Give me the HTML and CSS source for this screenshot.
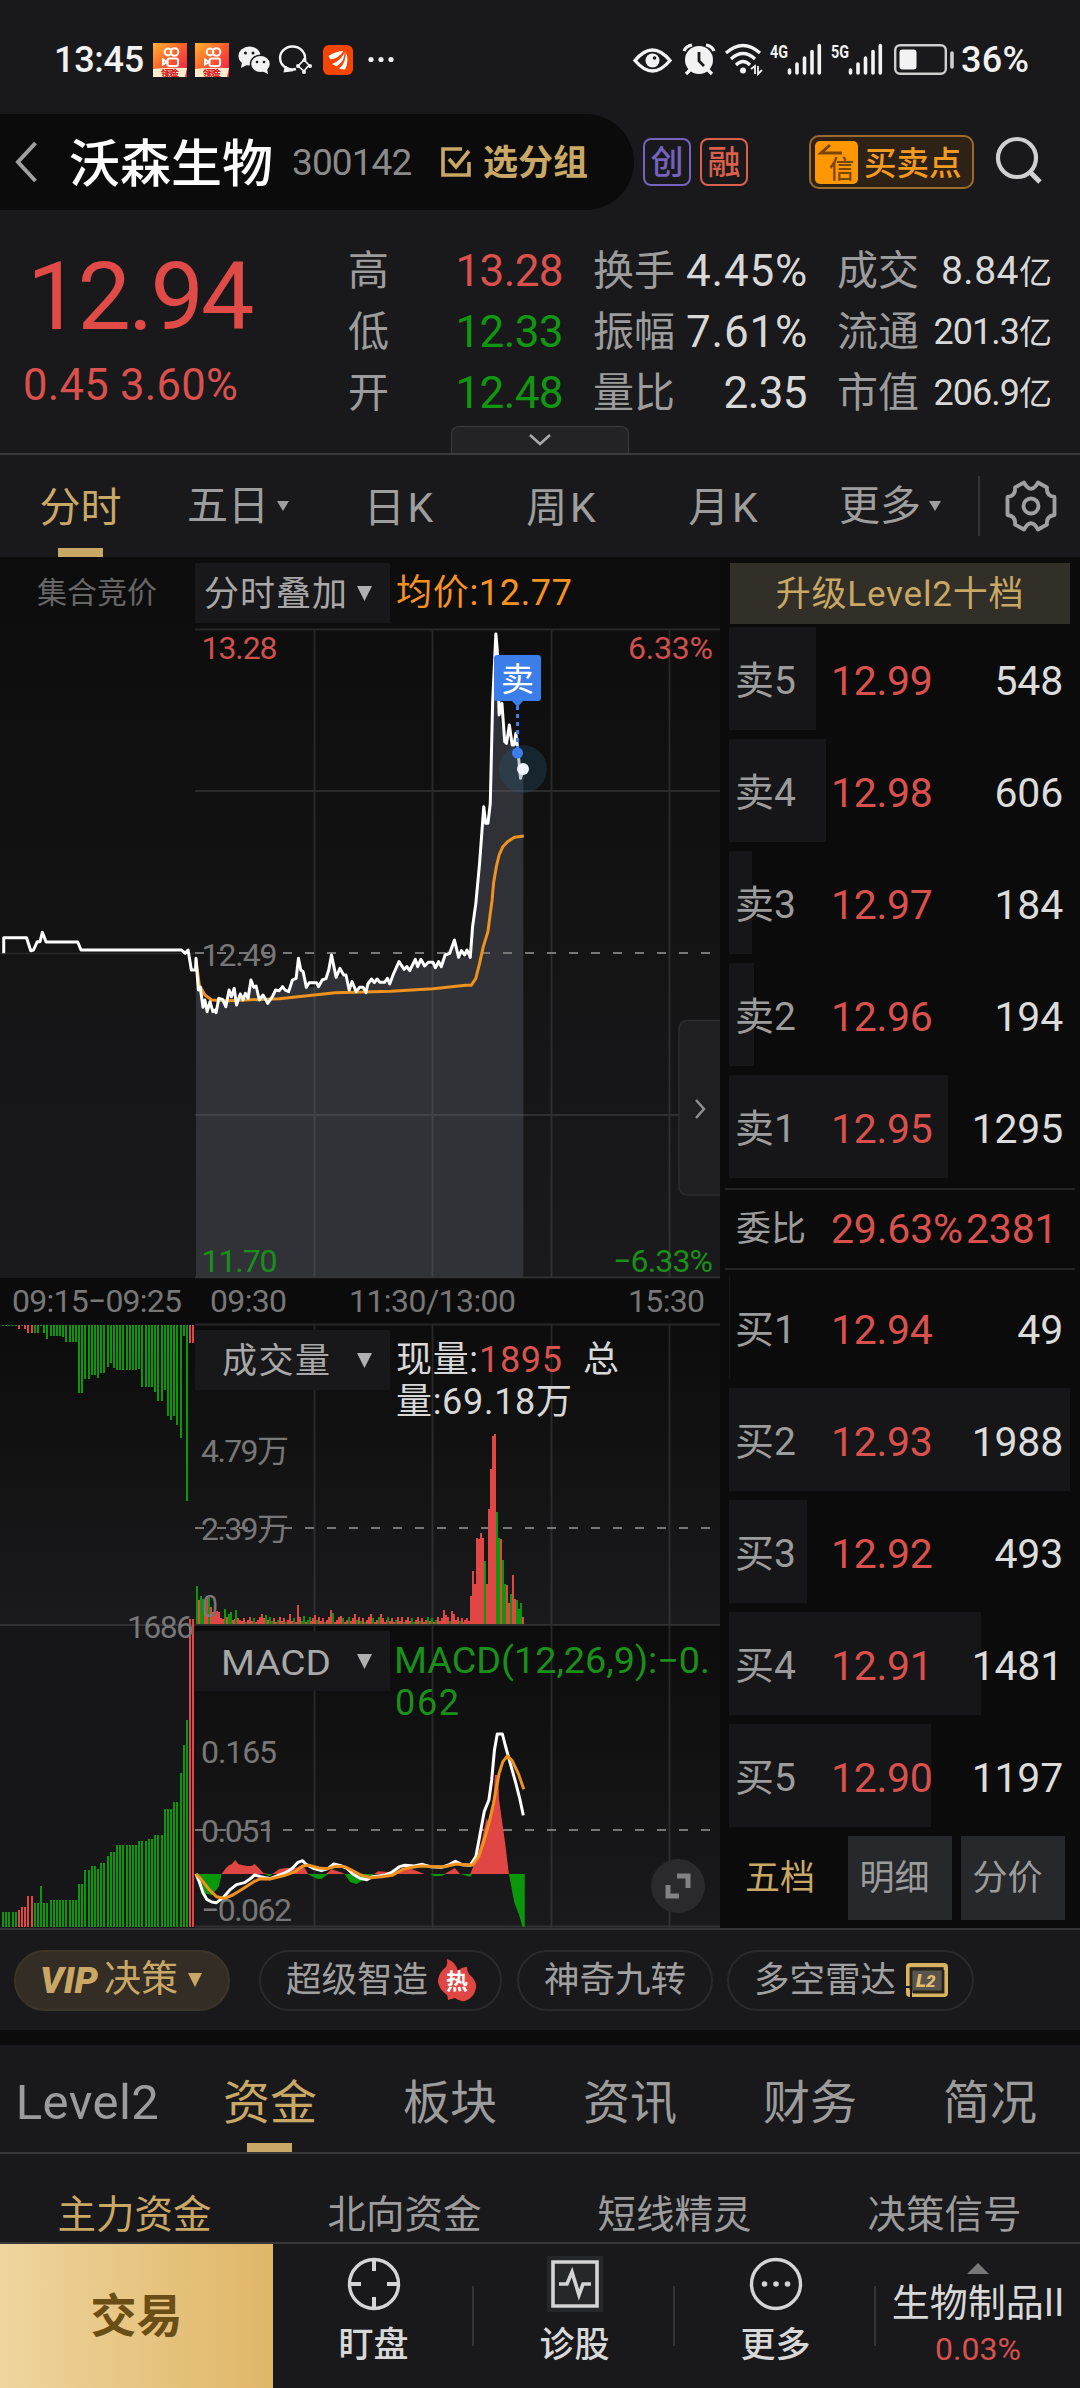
FILE: index.html
```html
<!DOCTYPE html>
<html lang="zh-CN">
<head>
<meta charset="utf-8">
<title>沃森生物 300142</title>
<link rel="stylesheet" href="styles.css">
</head>
<body>
<main class="screen">
  <header class="status">
    <span class="clock">13:45</span>
    <svg class="status-left" width="246" height="40" viewBox="150 40 246 40">
      <defs>
        <linearGradient id="ks" x1="0" y1="0" x2="1" y2="1"><stop offset="0" stop-color="#ffb52e"/><stop offset=".5" stop-color="#ff5a2c"/><stop offset="1" stop-color="#f5124f"/></linearGradient>
        <g id="kuaishou">
          <rect width="34" height="34" fill="url(#ks)"/>
          <g fill="none" stroke="#fff" stroke-width="2"><circle cx="15" cy="9" r="3.4"/><circle cx="21.5" cy="9" r="3.8"/><rect x="14.5" y="15.500" width="10.500" height="7.500" rx="2"/><path d="M14 19l-4-2.500v5z"/></g>
          <path d="M0 26q14-2 34-1l-2 9H0z" fill="#ffeccd"/>
          <text x="8" y="33" font-size="7.500" font-weight="900" fill="#d52222" textLength="18">领现金</text>
        </g>
      </defs>
      <use href="#kuaishou" x="153" y="43"/><use href="#kuaishou" x="195" y="43"/>
      <g fill="#f2f2f2"><ellipse cx="249.500" cy="56" rx="11" ry="9.500"/><path d="M242 62l-1 6 6-3z"/></g>
      <g fill="#f2f2f2" stroke="#19191b" stroke-width="1.500"><ellipse cx="260.500" cy="64" rx="10" ry="8.800"/></g><path d="M262 71l6 3-1-6z" fill="#f2f2f2"/>
      <g fill="#19191b"><circle cx="245.500" cy="53" r="1.500"/><circle cx="253" cy="53" r="1.500"/><circle cx="257" cy="62" r="1.300"/><circle cx="264" cy="62" r="1.300"/></g>
      <g fill="none" stroke="#f2f2f2" stroke-width="2.400"><path d="M296 69a12.500 11.500 0 1 1 9-10M286 66l-1 5 8-1"/><path d="M304 60l5 5-5 6-6-5z" stroke-width="1.600"/></g>
      <g fill="#f2f2f2"><circle cx="304.500" cy="60" r="2"/><circle cx="310" cy="66" r="2"/><circle cx="304" cy="72" r="2"/><circle cx="298" cy="66" r="2"/></g>
      <rect x="323" y="45" width="30" height="30" rx="6" fill="#f54500"/>
      <g fill="#fff"><path d="M328.500 56q8-5 15-5q-4 7-13 8.500z"/><path d="M332 64q10-4 13-13q2 10-8 15.500z"/><path d="M339 69q8-7 6-18q5 9 0 18.500z"/></g>
      <path d="M331 60.500q9-2 13.500-9M337 67q9-6 8-15.500" stroke="#f54500" stroke-width="1.300" fill="none"/>
      <g fill="#f2f2f2"><circle cx="371" cy="59.500" r="2.600"/><circle cx="381" cy="59.500" r="2.600"/><circle cx="391" cy="59.500" r="2.600"/></g>
    </svg>
    <svg class="status-right" width="326" height="40" viewBox="632 40 326 40">
      <g fill="none" stroke="#f2f2f2" stroke-width="3.400"><path d="M635 60.500q17.500-21 35 0q-17.500 21-35 0z"/></g>
      <circle cx="652.500" cy="60.500" r="7" fill="#f2f2f2"/><circle cx="654.500" cy="58" r="1.800" fill="#19191b"/>
      <g fill="none" stroke="#f2f2f2" stroke-width="3.200"><path d="M684 51q2-5 8-6M714 51q-2-5-8-6M690 70l-4 4M708 70l4 4"/></g><circle cx="699" cy="60" r="14" fill="#f2f2f2"/><path d="M699 52v9l5 5" fill="none" stroke="#19191b" stroke-width="2.800"/>
      <g fill="none" stroke="#f2f2f2" stroke-width="3.200"><path d="M726 53q17-15 34 0M731 59q12-11 24 0M736 65q7-7 14 0"/></g><circle cx="743" cy="70.500" r="3" fill="#f2f2f2"/><path d="M751 69l4-3v8M758 66v8l4-4" fill="none" stroke="#f2f2f2" stroke-width="1.800"/>
      <g class="net"><text x="770" y="57.500" textLength="18" lengthAdjust="spacingAndGlyphs">4G</text><text x="831" y="57.500" textLength="18" lengthAdjust="spacingAndGlyphs">5G</text></g>
      <g stroke="#f2f2f2" stroke-width="3.600" stroke-linecap="round"><path id="sig" d="M789.500 70v3M797 64v9M804.500 58v15M812 51.500v21.500M819.300 45.500v27.500"/><use href="#sig" x="61"/></g>
      <rect x="895.200" y="45.200" width="50.600" height="28.600" rx="5" fill="none" stroke="#cfcfcf" stroke-width="2.400"/><rect x="899.500" y="49.500" width="17" height="20" rx="3" fill="#f2f2f2"/><path d="M952 53v14" stroke="#cfcfcf" stroke-width="3.600" stroke-linecap="round"/>
    </svg>
    <span class="battery">36%</span>
  </header>

  <section class="title">
    <div class="name-pill">
      <svg width="24" height="42" viewBox="0 0 24 42"><path d="M21.500 2L4 21l17.500 19" fill="none" stroke="#a0a0a0" stroke-width="4"/></svg>
      <h1>沃森生物</h1><span class="code">300142</span>
      <svg width="32" height="32" viewBox="0 0 32 32" class="check"><path d="M22 3H3v26h26V16M9 13l7 8L29 5" fill="none" stroke="#c9a866" stroke-width="3.600"/></svg>
      <span class="group">选分组</span>
    </div>
    <span class="tag violet">创</span><span class="tag coral">融</span>
    <span class="signal"><svg width="43" height="43" viewBox="0 0 43 43"><rect width="43" height="43" rx="5" fill="#ff9800"/><path d="M15 4L6 12H27" fill="none" stroke="#7a4508" stroke-width="3"/><text x="14" y="37" font-size="25" fill="#7a4508">信</text></svg><span>买卖点</span></span>
    <svg class="search" width="52" height="52" viewBox="0 0 52 52"><circle cx="23" cy="22" r="19" fill="none" stroke="#d0d0d0" stroke-width="4.200"/><path d="M36 36l10 10" stroke="#d0d0d0" stroke-width="5"/></svg>
  </section>

  <section class="quote">
    <div class="last"><div class="price">12.94</div><div class="change">0.45 3.60%</div></div>
    <dl class="stats">
      <dt>高</dt><dd class="up">13.28</dd><dt>换手</dt><dd class="w">4.45%</dd><dt>成交</dt><dd class="m">8.84<i>亿</i></dd>
      <dt>低</dt><dd class="down">12.33</dd><dt>振幅</dt><dd class="w">7.61%</dd><dt>流通</dt><dd class="s">201.3<i>亿</i></dd>
      <dt>开</dt><dd class="down">12.48</dd><dt>量比</dt><dd>2.35</dd><dt>市值</dt><dd class="s">206.9<i>亿</i></dd>
    </dl>
    <div class="pull"><svg width="24" height="14" viewBox="0 0 24 14"><path d="M2 2l10 9L22 2" fill="none" stroke="#aaa" stroke-width="2.600"/></svg></div>
  </section>

  <nav class="periods">
    <span class="on">分时</span><span>五日<b></b></span><span class="k">日K</span><span class="k">周K</span><span class="k">月K</span><span>更多<b></b></span>
    <em><svg width="52" height="52" viewBox="-26 -26 52 52" fill="none" stroke="#a0a0a0" stroke-width="3.800" stroke-linejoin="round"><path d="M-7-23.500Q0-11 7-23.500L16-18.500Q15-10 23.500-9V9Q15 10 16 18.500L7 23.500Q0 11-7 23.500L-16 18.500Q-15 10-23.500 9V-9Q-15-10-16-18.500Z"/><circle r="7.500"/></svg></em>
  </nav>

  <section class="market">
    <svg class="charts" width="720" height="1371" viewBox="0 557 720 1371">
      <defs>
        <linearGradient id="shade" x1="0" y1="0" x2="0" y2="1"><stop offset="0" stop-color="#0c0c0c"/><stop offset="1" stop-color="#1a1a1c"/></linearGradient>
      </defs>
      <rect y="557" width="720" height="721" fill="url(#shade)"/>
      <rect y="1324" width="195" height="302" fill="url(#shade)"/><rect x="195" y="1324" width="525" height="301" fill="url(#shade)"/>
      <rect y="1626" width="195" height="302" fill="#161618"/><rect x="195" y="1626" width="525" height="302" fill="url(#shade)"/>
      <g class="price" transform="matrix(.4656 0 0 .33333 0 900)">
        <path class="area" d="M421 175 426 270 430 262 436 322 445 335 464 338 470 295 485 320 492 270 508 315 522 300 539 240 557 300 575 310 592 270 620 275 628 240 636 235 641 175 658 262 684 260 700 236 712 165 722 232 743 225 750 270 765 275 786 278 798 237 837 252 857 185 880 212 892 178 935 203 956 165 976 120 985 172 1010 172 1015 80 1022 10 1030-110 1039-280 1048-230 1053-290 1058-590 1065-798 1072-555 1084-475 1100-465 1113-440 1118-365 1124-390V1130H421Z"/>
      </g>
      <path class="grid" d="M195 629.500H720M195 791H720M195 1115H720M195 1277.500H720M195 1324.500H720M0 1625H720M195 1926.500H720M314.500 629V1277M314.500 1324V1928M432.500 629V1277M432.500 1324V1928M551.500 629V1277M551.500 1324V1928M669.500 629V1277M669.500 1324V1928"/>
      <path d="M0 953.500H195" stroke="#28282a" stroke-width="1.500"/>
      <path class="dash" d="M195 953H712M195 1528H712M195 1830H712"/>
      <g class="axis">
        <text class="c-up" x="201.500" y="659" textLength="76">13.28</text><text class="c-up end" x="713" y="659" textLength="85">6.33%</text>
        <text x="201.500" y="966" textLength="76" fill="#9a9a9a">12.49</text>
        <text class="c-down" x="201.500" y="1272" textLength="76">11.70</text><text class="c-down end" x="713" y="1272" textLength="100">−6.33%</text>
        <text x="12" y="1312" textLength="170">09:15−09:25</text><text x="210" y="1312" textLength="77">09:30</text><text x="349" y="1312" textLength="167">11:30/13:00</text><text x="628" y="1312" textLength="77">15:30</text>
        <text x="201" y="1462" textLength="88">4.79万</text><text x="201" y="1540" textLength="88">2.39万</text>
        <text x="201" y="1763" textLength="76">0.165</text><text x="201" y="1842" textLength="75">0.051</text><text x="201" y="1921" textLength="91">−0.062</text>
        <text x="37" y="603" style="font-size:30px;fill:#666">集合竞价</text>
      </g>
      <g id="bars" shape-rendering="crispEdges"></g>
      <g class="axis"><text x="202" y="1617" textLength="16" lengthAdjust="spacingAndGlyphs">0</text><text x="127" y="1638" textLength="67">1686</text></g>
      <g class="price" transform="matrix(.4656 0 0 .33333 0 900)">
        <polyline class="avg" points="421,180 428,255 440,285 455,300 490,302 600,296 640,290 720,278 840,274 930,266 1000,256 1012,256 1022,235 1030,190 1038,140 1048,95 1053,40 1057,0 1060,-50 1066,-100 1072,-135 1080,-160 1090,-175 1105,-188 1125,-192"/>
        <polyline class="line" points="8,160 8,113 57,113 66,152 72,150 80,125 86,125 91,97 99,126 167,126 174,150 390,150 398,160 404,150 411,210 420,210 421,175 426,270 430,262 436,322 440,300 445,335 451,305 457,335 462,330 464,338 470,295 478,298 485,320 492,270 497,290 503,265 508,315 516,282 522,300 527,280 533,295 539,240 545,262 550,258 557,300 565,285 575,310 585,290 592,270 600,272 607,260 612,270 620,275 628,240 636,235 641,175 646,210 651,215 658,262 664,248 680,248 684,260 692,240 700,236 706,210 712,165 722,232 730,205 738,225 743,225 750,270 756,245 765,275 772,262 780,262 786,278 790,252 798,237 804,248 810,237 816,247 826,247 832,235 837,252 845,222 857,185 868,208 874,200 880,212 892,178 897,200 904,178 912,198 920,187 930,187 935,203 942,185 948,200 956,165 966,160 976,120 985,172 991,152 998,165 1003,150 1010,172 1015,80 1022,10 1030,-110 1039,-280 1043,-230 1048,-230 1053,-290 1058,-590 1060,-650 1065,-798 1068,-750 1069,-720 1072,-555 1078,-590 1084,-475 1088,-470 1094,-525 1100,-465 1104,-465 1108,-500 1113,-440 1118,-365 1123,-390"/>
      </g>
      <circle cx="523" cy="769" r="24" fill="#265673" opacity=".3"/><circle cx="523" cy="769" r="6" fill="#eef4ff"/>
      <path d="M517.500 706V750" stroke="#3f7fe8" stroke-width="3" stroke-dasharray="4 4"/><circle cx="517.500" cy="753" r="5.500" fill="#3b7de9"/>
      <path d="M497 655h41q3 0 3 3v40q0 3-3 3h-15l-5.500 6-5.500-6h-15q-3 0-3-3v-40q0-3 3-3z" fill="#3b7de9"/>
      <text x="501" y="691" font-size="33" fill="#fff">卖</text>

      <g class="drop">
        <rect x="195" y="563" width="195" height="60"/><rect x="195" y="1330" width="195" height="60"/><rect x="195" y="1631" width="195" height="60"/>
        <text x="204" y="606" textLength="143">分时叠加</text><text x="222" y="1373" textLength="108">成交量</text><text x="221" y="1675" font-size="38" textLength="110" lengthAdjust="spacingAndGlyphs">MACD</text>
        <path d="M357 586h15l-7.500 15zM357 1353h15l-7.500 15zM357 1654h15l-7.500 15z"/>
      </g>
      <g class="note">
        <text x="396" y="605" fill="#f79222" textLength="176">均价:12.77</text>
        <text x="396" y="1372" textLength="82">现量:</text><text x="479" y="1372" fill="#d9544f" textLength="83">1895</text><text x="583" y="1372">总</text>
        <text x="396" y="1414" textLength="176">量:69.18万</text>
        <text x="394" y="1673" fill="#1a8f1a" textLength="316" lengthAdjust="spacingAndGlyphs">MACD(12,26,9):−0.</text><text x="395" y="1715" fill="#1a8f1a" textLength="64">062</text>
      </g>
      <g transform="matrix(.4656 0 0 .33333 0 1610)">
        <path fill="#e04643" d="M476 792L485 775 492 766 498 762 505 750 512 762 520 765 530 768 540 768 547 762 553 770 565 788 575 792ZM585 792L600 777 615 774 635 774 650 765 662 792ZM700 792L712 778 735 788 740 792ZM803 792L812 784 845 787 865 776 885 778 912 792ZM955 792L977 774 988 792ZM1010 792L1022 750 1035 690 1045 625 1050 640 1060 560 1063 495H1070L1072 570 1080 650 1085 700 1093 792Z"/>
        <path fill="#0a970a" d="M421 792H476L470 830 455 856 440 850 430 815ZM570 792H585L578 800ZM660 792H705L690 807 680 806ZM740 792H803L785 808 765 822 752 816ZM925 792H957L950 797 932 799ZM988 792H1014L1010 800ZM1093 792H1127V950H1122L1115 915 1105 880Z"/>
        <g class="price">
        <polyline class="line" points="421,792 428,815 436,848 444,868 455,876 465,878 480,862 495,838 508,824 525,818 536,808 547,795 560,800 580,806 598,796 612,789 628,775 640,757 650,752 658,764 675,776 690,782 704,776 717,762 732,767 745,775 758,792 772,804 788,809 800,800 825,796 840,788 858,770 870,766 890,768 907,763 925,770 948,772 965,764 978,754 992,764 1010,766 1022,740 1030,680 1040,605 1050,570 1056,510 1062,420 1068,372 1079,372 1085,405 1096,460 1108,520 1117,570 1124,616"/>
        <polyline class="avg" points="421,792 432,808 450,840 465,860 482,865 500,855 520,838 545,815 560,806 580,807 610,797 635,784 650,768 665,766 685,774 704,776 722,769 740,770 755,780 775,795 795,803 820,800 842,796 865,778 885,772 905,768 930,770 955,770 980,762 1005,765 1015,765 1028,740 1038,700 1050,640 1060,580 1072,490 1080,455 1090,438 1100,452 1113,490 1125,538"/>
        </g>
      </g>
      <path d="M720 1020.500H688q-9 0-9 9V1186q0 9 9 9H720" fill="#1f1f21" stroke="#2c2c2e" stroke-width="1.500"/><path d="M696 1100l8 9-8 9" fill="none" stroke="#909090" stroke-width="2.500"/>
      <circle cx="678" cy="1886" r="27" fill="#2a2a2c"/><path d="M677 1876H688V1888M668 1885V1896H679" fill="none" stroke="#828282" stroke-width="5"/>
    </svg>

    <aside class="book">
      <div class="upgrade">升级Level2十档</div>
      <ol class="levels" id="asks"></ol>
      <div class="ratio"><span>委比</span><b>29.63%</b><b>2381</b></div>
      <ol class="levels" id="bids"></ol>
      <div class="book-tabs"><span class="on">五档</span><span>明细</span><span>分价</span></div>
    </aside>
  </section>

  <section class="tools">
    <span class="pill vip"><svg width="68" height="56" viewBox="0 0 68 56"><text x="4" y="41" textLength="58" lengthAdjust="spacingAndGlyphs">VIP</text></svg>决策<b></b></span>
    <span class="pill p1">超级智造<svg width="40" height="44" viewBox="0 0 40 44"><path d="M10 1q8 2 11 12q3-4 9-4q0 4 2 7q8 7 7 14q-2 10-11 13q-5 1-10-3l-7 2q0-3-1-5Q2 31 1 24q0-9 8-15q2-4 1-8z" fill="#e04643"/><text x="9" y="31" font-size="22" fill="#fff" font-weight="700">热</text></svg></span>
    <span class="pill p2">神奇九转</span>
    <span class="pill p3">多空雷达<svg width="44" height="36" viewBox="0 0 44 36"><rect x="3" y="3" width="38" height="30" rx="2" fill="#59544d" stroke="#d9b35f" stroke-width="4"/><path d="M6 28V7H38M8 30H38V8" fill="none" stroke="#28241c" stroke-width="2.800"/><path d="M0 25h6v10" stroke="#19191b" stroke-width="2" fill="none"/><text x="11" y="25" font-size="19" font-weight="900" font-style="italic" fill="#e2bd70">L<tspan font-size="17">2</tspan></text></svg></span>
  </section>

  <nav class="sections"><span class="latin">Level2</span><span class="on">资金</span><span>板块</span><span>资讯</span><span>财务</span><span>简况</span></nav>
  <nav class="subs"><span class="on">主力资金</span><span>北向资金</span><span>短线精灵</span><span>决策信号</span></nav>

  <footer class="dock">
    <a class="trade">交易</a>
    <a class="act"><svg width="58" height="58" viewBox="-29 -29 58 58" fill="none" stroke="#d4d4d4" stroke-width="3.400"><circle r="24.500"/><path d="M0-24V-13M0 24V13M-24 0H-13M24 0H13" stroke-width="4"/></svg>盯盘</a>
    <a class="act"><svg width="58" height="58" viewBox="-29 -29 58 58" fill="none" stroke="#d4d4d4" stroke-width="3.600"><path d="M-28-28H28V28H-28Z" fill="#262729" stroke="none"/><path d="M-22-22H22V22H-22Z"/><path d="M-16 0H-8L-3-12 4 11 8 0H16"/></svg>诊股</a>
    <a class="act"><svg width="58" height="58" viewBox="-29 -29 58 58" fill="none" stroke="#d4d4d4" stroke-width="3.400"><circle r="24.500"/><g fill="#d4d4d4" stroke="none"><circle cx="-11.500" r="2.800"/><circle r="2.800"/><circle cx="11.500" r="2.800"/></g></svg>更多</a>
    <a class="sector"><b></b>生物制品II<small>0.03%</small></a>
  </footer>
</main>
<script src="charts.js"></script>
</body>
</html>
```
FILE: styles.css
```css
* { box-sizing: border-box; }
body { margin: 0; background: #19191b; color: #d8d8d8; font-family: Roboto, "Noto Sans CJK SC", sans-serif; }
svg { display: block; flex: none; }
h1, dl, dd, ol { margin: 0; padding: 0; }
i, em { font-style: normal; }
.screen { width: 1080px; height: 2388px; overflow: hidden; display: flex; flex-direction: column; background: #19191b; }
.screen > * { flex: none; }
.up { color: #d9504d; }
.down { color: #109610; }

.status { height: 114px; padding: 40px 47px 0 54px; display: flex; align-items: flex-start; color: #f2f2f2; }
.clock, .battery { font-size: 36px; line-height: 40px; font-weight: 500; }
.clock { width: 96px; letter-spacing: -.3px; }
.status-right { margin-left: 236px; }
.battery { margin-left: 3px; white-space: nowrap; letter-spacing: .3px; }
.net { fill: #f2f2f2; font-size: 19px; font-weight: 700; }

.title { height: 96px; display: flex; align-items: center; }
.name-pill { width: 634px; height: 96px; border-radius: 0 48px 48px 0; background: #0b0b0b; display: flex; align-items: center; padding-left: 14px; }
.title h1 { font-size: 51px; font-weight: 500; color: #fff; line-height: 90px; width: 223px; margin-left: 31px; padding-top: 5px; }
.code { font-size: 37px; color: #8a8a8a; letter-spacing: -.9px; width: 148px; }
.check { margin-right: 11px; }
.group { font-size: 35px; font-weight: 700; color: #c9a866; line-height: 90px; padding-top: 3px; }
.tag { width: 48px; height: 48px; border: 2px solid; border-radius: 8px; display: grid; place-items: center; font-size: 33px; font-weight: 500; line-height: 45px; margin-left: 9px; }
.violet { color: #7563bd; }
.coral { color: #d9604c; }
.signal { margin-left: 61px; width: 165px; height: 54px; border: 2px solid #9c6b2c; border-radius: 10px; background: #2e2216; display: flex; align-items: center; gap: 6px; padding-left: 4px; font-size: 32.500px; font-weight: 500; line-height: 50px; color: #f39a20; }
.signal span { padding-top: 3px; }
.search { margin-left: 20px; }

.quote { height: 245px; display: flex; position: relative; border-bottom: 2px solid #3a3a3c; }
.last { width: 348px; color: #e04b48; }
.price { font-size: 95px; line-height: 100px; margin: 37px 0 0 27px; letter-spacing: -2.800px; }
.change { font-size: 43.500px; line-height: 50px; margin: 14px 0 0 23px; color: #d9504d; letter-spacing: .3px; white-space: nowrap; }
.stats { width: 704px; height: 183px; margin-top: 31px; display: grid; grid-template-columns: 84px 131px 113px 131px 114px 131px; grid-template-rows: repeat(3, 61px); }
.stats dt { font-size: 41px; line-height: 61px; color: #9c9c9c; white-space: nowrap; }
.stats dt:nth-of-type(3n+2) { padding-left: 30px; }
.stats dt:nth-of-type(3n) { padding-left: 30px; }
.stats dd { font-size: 44px; line-height: 60px; text-align: right; letter-spacing: -.6px; white-space: nowrap; }
.stats dd.w { letter-spacing: .8px; margin-right: -1px; }
.stats dd.m { font-size: 39px; letter-spacing: .5px; }
.stats dd.s { font-size: 36px; letter-spacing: -1px; }
.stats i { font-size: 33px; letter-spacing: 0; }
.pull { position: absolute; left: 451px; bottom: 0; width: 178px; height: 27px; border: 1.500px solid #3a3a3c; border-bottom: 0; border-radius: 8px 8px 0 0; background: #232326; display: grid; place-items: center; }

.periods { height: 102px; display: grid; grid-template: 102px / 161px 154px 170px 155px 169px 162px 109px; font-size: 41px; line-height: 102px; color: #9e9e9e; }
.periods span { display: flex; justify-content: center; align-items: center; gap: 8px; white-space: nowrap; }
.periods .k { letter-spacing: 3px; padding-top: 4px; }
.periods span.on { color: #c9a866; position: relative; padding-top: 4px; }
.periods .on::after { content: ""; position: absolute; left: 58px; bottom: 0; width: 45px; height: 9px; background: #c9a866; }
.periods b { border: 6px solid transparent; border-top: 10px solid #9e9e9e; border-bottom: 0; }
.periods em { height: 60px; align-self: center; margin-left: 7px; border-left: 2px solid #343436; display: flex; align-items: center; padding-left: 25px; }

.market { height: 1371px; display: flex; background: #0b0b0b; }
.grid { stroke: rgba(120, 120, 125, .25); stroke-width: 1.800; fill: none; }
.dash { stroke: #777; stroke-width: 2; stroke-dasharray: 9 13; fill: none; }
.area { fill: #333439; opacity: .95; }
.price .line, .price .avg { fill: none; stroke: #fff; stroke-width: 3; vector-effect: non-scaling-stroke; stroke-linejoin: round; }
.price .avg { stroke: #f0921e; }
.axis text { font-size: 32px; fill: #777; }
.axis .c-up { fill: #cf504d; }
.axis .c-down { fill: #1a8f1a; }
.axis .end { text-anchor: end; }
.drop rect { fill: #18181a; }
.drop text { font-size: 35px; fill: #a8a8a8; }
.drop path { fill: #b0b0b0; }
.note text { font-size: 36px; }
.note text:not([fill]) { fill: #d8d8d8; }

.book { width: 360px; padding: 6px 5px 0; }
.upgrade { height: 61px; margin: 0 5px; background: #312f28; color: #c9a866; font-size: 35px; line-height: 63px; text-align: center; letter-spacing: .8px; }
.levels { list-style: none; margin: 3px 5px 0 4px; }
.levels li { height: 103px; margin-bottom: 9px; display: grid; grid-template-columns: 95px 1fr 115px; align-items: center; padding: 0 7px; line-height: 103px; font-size: 41px; background: linear-gradient(#161618, #161618) 0 0 / var(--depth) 100% no-repeat; }
.levels li > * { font-weight: 400; white-space: nowrap; padding-top: 3px; }
.levels li > span { color: #9c9c9c; font-size: 39px; margin-left: -1px; }
.levels b { color: #d9504d; letter-spacing: -.3px; }
.levels em { text-align: right; color: #dcdcdc; letter-spacing: -.2px; }
.ratio { height: 82px; border: 2px solid #242426; border-width: 2px 0; display: grid; grid-template-columns: 95px 135px 1fr; padding-left: 11px; font-size: 41px; line-height: 79px; }
.ratio span { font-size: 35px; color: #9c9c9c; }
.ratio b { font-weight: 400; color: #d9504d; letter-spacing: -.2px; }
#asks { height: 561px; }
#bids { margin-top: 6px; height: 560px; }
.book-tabs { display: flex; gap: 9px; margin-left: 10px; font-size: 35px; line-height: 85px; color: #9c9c9c; }
.book-tabs span { width: 104px; height: 84px; background: #27282c; padding-right: 11px; text-align: center; }
.book-tabs .on { background: none; color: #c9a866; padding-right: 14px; }

.tools { height: 102px; border-top: 2px solid #333335; display: flex; align-items: center; padding-left: 14px; }
.pill { height: 61px; border: 2px solid #2a2a2c; border-radius: 31px; display: flex; align-items: center; font-size: 35.500px; line-height: 58px; color: #a0a0a0; white-space: nowrap; padding-left: 25px; }
.vip { width: 216px; background: #332d25; border-color: #3c3527; color: #c9a866; margin-right: 29px; padding-left: 20px; font-size: 37px; }
.vip text { font: italic 900 37px Roboto, sans-serif; fill: #c9a866; }
.vip b { border: 7px solid transparent; border-top: 14px solid #c9a866; border-bottom: 0; margin-left: 10px; }
.p1 { width: 243px; margin-right: 15px; }
.p1 svg, .p3 svg { margin-left: 9px; }
.p2 { width: 196px; margin-right: 14px; }
.p3 { width: 247px; }

.sections { height: 124px; border-top: 15px solid #0b0b0b; border-bottom: 2px solid #38383a; display: grid; grid-template-columns: repeat(6, 180px); text-align: center; font-size: 47px; line-height: 115px; color: #9c9c9c; }
.sections span { height: 107px; }
.sections .latin { padding-right: 5px; font-size: 49px; letter-spacing: .4px; }
.sections .on { color: #c9a866; position: relative; }
.sections .on::after { content: ""; position: absolute; left: 67px; bottom: 0; width: 45px; height: 9px; background: #c9a866; }
.subs { height: 90px; padding-top: 16px; border-bottom: 2px solid #38383a; display: grid; grid-template-columns: repeat(4, 270px); text-align: center; font-size: 38.500px; line-height: 90px; color: #9c9c9c; }
.subs span { height: 70px; margin-left: -1px; }
.subs .on { color: #c9a866; }

.dock { height: 144px; display: flex; }
.trade { width: 273px; background: linear-gradient(90deg, #efd59e, #e0b668); color: #6a4e15; font-size: 46px; font-weight: 700; line-height: 144px; text-align: center; }
.act { width: 201px; display: flex; flex-direction: column; align-items: center; padding-top: 11px; font-size: 35px; font-weight: 500; line-height: 60px; background: linear-gradient(#343436, #343436) 100% 42px / 2px 60px no-repeat; }
.act svg { margin-bottom: 3px; }
.sector { flex: 1; display: flex; flex-direction: column; align-items: center; font-size: 38px; line-height: 58px; white-space: nowrap; }
.sector b { margin: 19px 0 0; border: 11px solid transparent; border-bottom: 11px solid #777; border-top: 0; }
.sector small { font-size: 32px; line-height: 34px; color: #d9504d; }
```
FILE: charts.js
```js
const bars = document.getElementById('bars');
const RED = '#e04643', GREEN = '#0a970a';
function bar(x, y, w, h, fill) {
  const r = document.createElementNS('http://www.w3.org/2000/svg', 'rect');
  Object.entries({ x, y, width: w, height: h, fill }).forEach(([k, v]) => r.setAttribute(k, v));
  bars.append(r);
}

// Call auction: unmatched volume hangs from the top, matched volume rises from the bottom.
const unmatched = [1,1,1,1,1,4,1,4,8,8,8,8,1,8,14,11,11,11,11,12,17,17,17,17,68,68,54,54,50,50,53,48,48,42,38,43,45,45,45,45,45,45,45,44,62,62,62,62,67,76,76,65,91,95,91,100,113,11,176,18,18];
const matched = [15,15,15,15,15,17,20,20,31,31,24,24,41,24,24,27,27,27,27,27,27,27,27,27,43,43,57,57,61,61,58,64,64,71,75,75,82,82,82,82,82,82,82,86,86,86,88,88,92,92,92,118,118,118,125,125,154,182,207,308,308];
unmatched.forEach((h, i) => bar(2 + i * 3.17, 1325, 2, h, [5,7,8,9,59,60].includes(i) ? RED : GREEN));
matched.forEach((h, i) => bar(2 + i * 3.17, 1927 - h, 2, h, [5,6,7,8,9,59,60].includes(i) ? RED : GREEN));

// Volume per minute; negative values are down minutes.
const open = [-38,24,-28,-25,24,28,-26,17,12,11,13,12,6,5,-15,7,-10,-12,4,5,-14,6,4];
const surge = [28,53,40,86,85,91,86,-63,40,115,155,188,190,-112,-86,85,-64,-40,39,21,-30,49,25,-24,-15,-21,7];
const peaks = { 33: 10, 35: -9, 47: 10, 51: 19, 54: -8, 60: 9, 68: 14, 69: -11, 73: 8, 80: 10, 88: 10, 93: 10, 104: 7, 125: 14, 126: 9, 129: 13, 130: 10, 137: 6 };
for (let k = 0; k < 166; k++) {
  const quiet = (2 + (k * 7 % 5) * 1.2) * (k % 4 === 1 || k % 9 === 2 ? -1 : 1);
  const v = k < open.length ? open[k] : k >= 139 ? surge[k - 139] : peaks[k] || quiet;
  bar(196 + k * 1.974, 1624 - Math.abs(v), 2, Math.abs(v), v < 0 ? GREEN : RED);
}

const asks = [[5, '12.99', 548, 87], [4, '12.98', 606, 97], [3, '12.97', 184, 23], [2, '12.96', 194, 25], [1, '12.95', 1295, 219]];
const bids = [[1, '12.94', 49, 1], [2, '12.93', 1988, 342], [3, '12.92', 493, 78], [4, '12.91', 1481, 252], [5, '12.90', 1197, 202]];
const rows = (side, list) => list.map(([n, price, size, depth]) =>
  `<li style="--depth:${depth}px"><span>${side}${n}</span><b>${price}</b><em>${size}</em></li>`).join('');
document.getElementById('asks').innerHTML = rows('卖', asks);
document.getElementById('bids').innerHTML = rows('买', bids);
```
